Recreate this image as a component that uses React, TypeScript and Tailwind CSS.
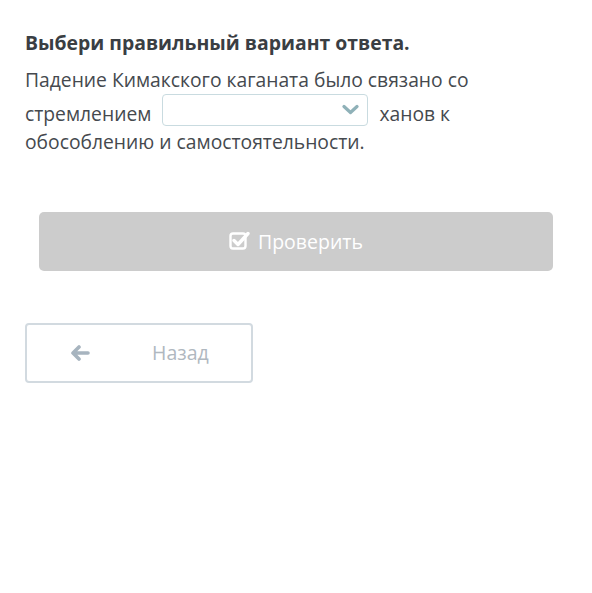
import React from "react";

export default function App() {
  return (
    <div className="min-h-[593px] w-[592px] bg-white text-[#3b3f44]" style={{ fontFamily: '"Open Sans", "Noto Sans", sans-serif' }}>
      <div className="px-[25px] pt-[29px]">
        <div className="text-[19.4px] font-bold leading-[28px] text-[#3a3e43]">Выбери правильный вариант ответа.</div>
        <div className="mt-[9px] text-[19.3px] leading-[28px] text-[#45494e]">
          Падение Кимакского каганата было связано со стремлением{" "}
          <span className="relative mx-[6px] inline-block h-[32px] w-[206px] rounded-[4px] border border-[#c9dbe0] bg-white align-[-5px]">
            <svg className="absolute right-[8px] top-[9px]" width="17" height="11" viewBox="0 0 17 11">
              <path d="M2 2.5 L8.5 8.5 L15 2.5" fill="none" stroke="#8fb1b8" strokeWidth="3.2" strokeLinecap="round" strokeLinejoin="round" />
            </svg>
          </span>{" "}
          ханов к обособлению и самостоятельности.
        </div>
      </div>
      <div className="mt-[56px] px-[39px]">
        <div className="flex h-[59px] items-center justify-center gap-[8px] rounded-[5px] bg-[#cccccc] text-[19.5px] text-white">
          <svg width="21" height="21" viewBox="0 0 21 21" className="-mt-[3px]">
            <rect x="1.5" y="3.5" width="15" height="15" rx="2.5" fill="none" stroke="white" strokeWidth="2.4" />
            <path d="M5 10.5 L9 14.5 L19 3.5" fill="none" stroke="white" strokeWidth="3.4" strokeLinecap="round" strokeLinejoin="round" />
          </svg>
          <span>Проверить</span>
        </div>
      </div>
      <div className="mt-[52px] px-[25px]">
        <div className="relative flex h-[60px] w-[228px] items-center rounded-[4px] border-2 border-[#d2dae0] bg-white">
          <svg width="20" height="16" viewBox="0 0 20 16" className="ml-[43px]">
            <path d="M9 2 L3 8 L9 14 M3.5 8 L18 8" fill="none" stroke="#a7b4bf" strokeWidth="3.6" strokeLinecap="round" strokeLinejoin="round" />
          </svg>
          <span className="ml-[62px] text-[19.5px] text-[#b0b8c0]">Назад</span>
        </div>
      </div>
    </div>
  );
}
